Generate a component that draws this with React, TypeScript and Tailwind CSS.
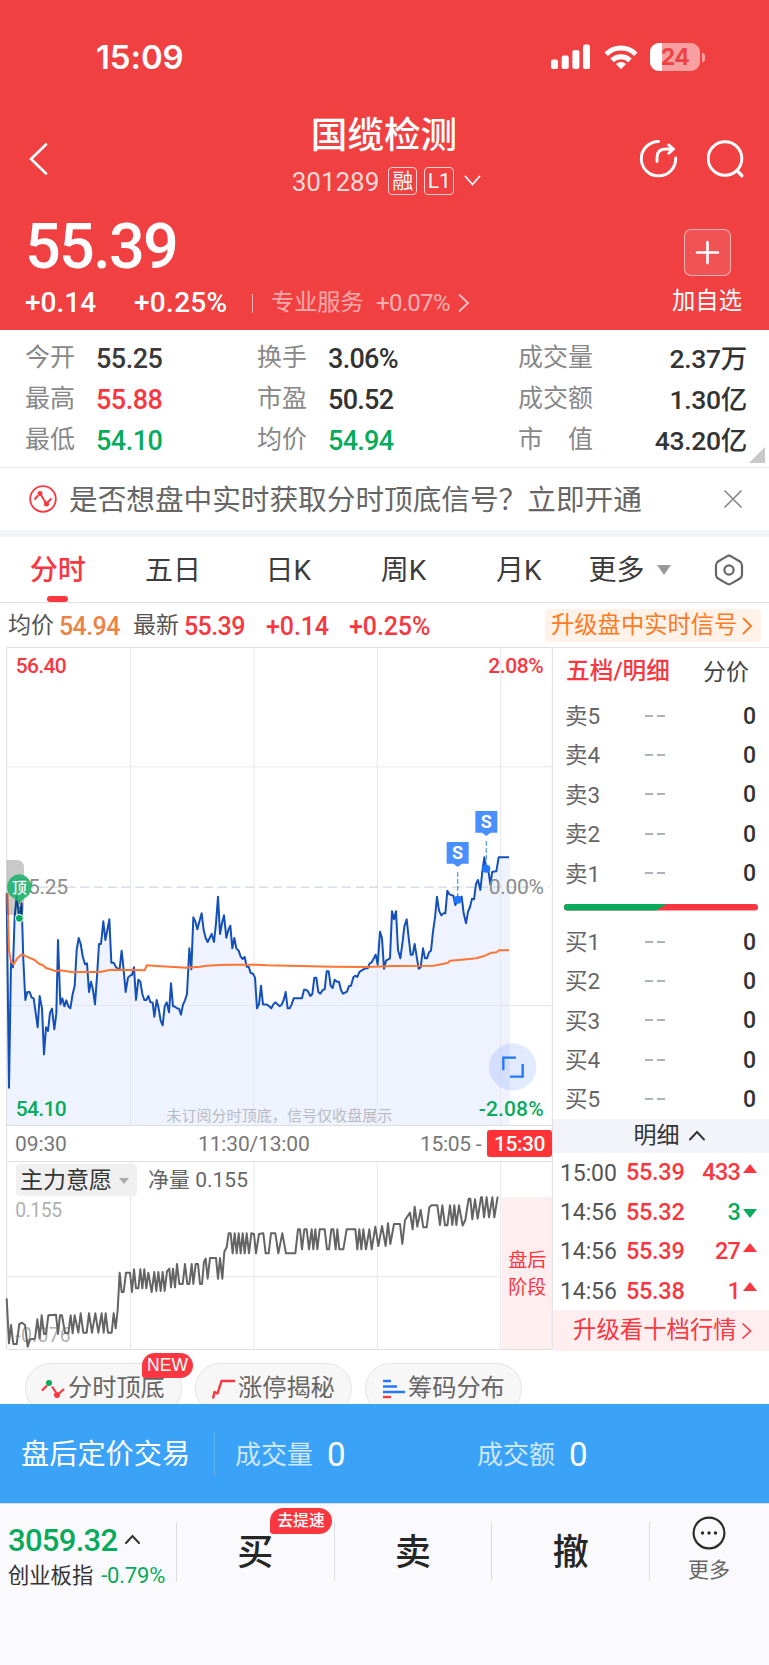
import type { ReactNode } from "react";

const PRICE_LINE =
  "20,760 27,1343 33,970 39,982 44,830 50,770 58,835 65,790 70,960 76,1080 82,1056 89,1056 95,1073 101,1075 113,1162 119,1068 126,1105 132,1243 138,1162 144,1173 150,1118 156,1106 163,1168 169,1120 174,900 181,1093 187,1075 193,1099 199,1081 205,1099 211,1105 218,1062 224,1038 230,930 236,894 242,912 248,948 255,973 261,970 267,1056 273,1025 279,1050 285,1093 291,1010 297,912 303,912 310,844 316,900 322,870 328,838 334,968 341,968 347,980 353,986 359,986 365,932 371,990 377,1056 384,1013 390,1007 396,1005 402,982 408,1080 415,1019 421,1025 427,1062 433,1080 439,1080 445,1068 451,1086 458,1088 463,1130 470,1080 476,1105 482,1142 488,1156 494,1099 500,1087 507,1117 513,1030 519,1099 525,1100 531,1105 537,1106 543,1124 549,1094 555,1081 561,1062 568,925 574,988 580,832 586,844 592,868 598,845 605,820 611,870 617,894 623,906 629,894 635,882 642,906 648,850 654,770 660,882 666,850 672,826 679,893 685,870 691,857 697,925 703,894 709,925 716,932 722,950 728,957 734,951 740,980 746,980 752,999 759,1001 765,1013 771,1105 777,1093 783,1037 789,1093 802,1094 814,1105 820,1093 826,1087 839,1099 845,1094 851,1080 857,1056 863,1105 869,1105 875,1093 881,1075 906,1075 912,1049 918,1049 924,1054 931,1068 937,1062 943,1013 949,1013 955,1056 961,1061 968,1050 974,1048 980,994 986,994 992,1037 998,1044 1004,1019 1011,1025 1017,1025 1023,1050 1029,1061 1041,1055 1047,1038 1053,1037 1060,1012 1066,1007 1072,1011 1078,996 1084,992 1096,985 1103,985 1109,970 1115,967 1127,944 1133,974 1140,875 1146,895 1152,986 1158,962 1170,955 1176,814 1182,838 1188,814 1194,930 1201,955 1207,912 1213,860 1220,838 1226,893 1232,944 1238,944 1244,912 1250,950 1256,986 1262,982 1269,925 1275,955 1281,955 1287,937 1293,932 1299,875 1305,832 1311,770 1317,812 1324,826 1330,820 1336,820 1342,752 1348,763 1360,767 1366,795 1373,780 1385,770 1391,820 1398,850 1404,815 1410,801 1416,776 1422,778 1428,732 1434,720 1441,750 1447,695 1453,652 1459,690 1465,690 1471,733 1477,695 1489,694 1496,652 1527,652";

const AVG_LINE =
  "22,760 27,930 33,965 41,973 52,955 66,943 80,950 104,960 118,972 128,975 138,984 152,988 168,994 180,991 220,997 240,996 300,996 328,990 350,989 434,991 440,976 470,978 560,983 600,980 620,977 660,975 700,974 765,974 800,976 1000,980 1100,981 1180,978 1300,977 1343,969 1350,962 1385,959 1428,955 1450,949 1475,938 1490,937 1497,931 1527,931";

const FORCE_LINE =
  "20,565 27,700 33,645 40,702 50,702 58,642 66,638 75,645 83,710 90,688 105,686 112,628 119,685 125,616 132,672 138,672 145,616 168,614 174,672 180,616 186,616 195,668 205,670 212,616 218,670 224,616 235,668 242,610 250,668 260,668 267,610 276,668 286,610 295,668 305,610 311,668 317,610 324,668 335,668 341,610 347,655 353,600 359,488 365,546 371,546 378,488 390,488 396,546 402,478 408,535 415,535 421,478 427,535 433,478 439,535 445,488 455,546 463,486 469,543 475,486 482,543 488,486 494,543 501,484 508,476 513,532 519,476 525,532 531,462 538,522 548,522 555,462 562,522 568,522 575,462 580,522 587,462 594,462 600,522 606,522 612,455 617,446 623,506 630,444 648,444 654,506 660,444 667,506 673,425 680,412 686,370 692,370 698,430 704,370 710,430 716,370 722,430 728,370 734,430 740,370 747,430 754,370 762,372 768,430 777,372 790,370 797,430 806,430 813,370 826,370 835,430 847,370 858,430 886,430 894,358 900,358 906,418 913,358 920,358 927,418 935,358 940,418 946,358 952,418 959,358 974,358 981,418 987,418 994,358 1000,358 1007,418 1012,358 1018,418 1030,418 1040,358 1066,358 1072,418 1078,358 1084,418 1090,358 1098,418 1108,358 1115,418 1126,350 1135,408 1146,348 1157,408 1164,340 1171,402 1182,342 1200,342 1207,402 1215,330 1230,308 1238,358 1244,290 1252,350 1262,300 1270,352 1280,352 1288,292 1295,286 1312,286 1320,345 1327,286 1335,346 1342,346 1350,286 1357,345 1363,286 1369,345 1377,286 1388,347 1396,330 1406,266 1411,266 1417,328 1425,268 1433,326 1443,262 1446,262 1452,322 1460,262 1467,322 1477,262 1483,322 1493,260";

const STATS = [
  ["今开", "55.25", "text-[#3a3a3a]", "换手", "3.06%", "text-[#333]", "成交量", "2.37万"],
  ["最高", "55.88", "text-[#fa3740]", "市盈", "50.52", "text-[#333]", "成交额", "1.30亿"],
  ["最低", "54.10", "text-[#07ab5b]", "均价", "54.94", "text-[#07ab5b]", "市　值", "43.20亿"],
];

const TABS = ["分时", "五日", "日K", "周K", "月K"];

const TRADES = [
  { time: "15:00", price: "55.39", volume: "433", up: true },
  { time: "14:56", price: "55.32", volume: "3", up: false },
  { time: "14:56", price: "55.39", volume: "27", up: true },
  { time: "14:56", price: "55.38", volume: "1", up: true },
];

function Stroke({
  d,
  w,
  h,
  width = 2,
  className = "",
}: {
  d: string;
  w: number;
  h: number;
  width?: number;
  className?: string;
}) {
  return (
    <svg
      width={w}
      height={h}
      viewBox={`0 0 ${w} ${h}`}
      fill="none"
      stroke="currentColor"
      strokeWidth={width}
      strokeLinecap="round"
      className={`shrink-0 ${className}`}
      aria-hidden="true"
    >
      <path d={d} />
    </svg>
  );
}

function StatusBar() {
  return (
    <div className="flex h-[114px] items-center pl-[96px] pr-[64px] font-['Inter','Noto_Sans_CJK_SC',sans-serif]">
      <span className="pt-[2px] text-[33px] font-semibold tracking-[-0.1px]">15:09</span>
      <svg width="40" height="26" viewBox="0 0 40 26" fill="currentColor" className="ml-auto" aria-hidden="true">
        <rect x="0" y="15.500" width="7" height="9.500" rx="2" />
        <rect x="10.700" y="11.500" width="7" height="13.500" rx="2" />
        <rect x="21.400" y="6" width="7" height="19" rx="2" />
        <rect x="32" y="0.500" width="7" height="24.500" rx="2" />
      </svg>
      <svg width="34" height="26" viewBox="0 0 34 26" className="ml-[13px]" aria-hidden="true">
        <g fill="none" stroke="currentColor" strokeWidth="5">
          <path d="M2.200 10.200a21 21 0 0 1 29.600 0" />
          <path d="M8 16.400a13 13 0 0 1 18 0" />
        </g>
        <path d="M17 25.300l-5-5.200a7.200 7.200 0 0 1 10 0z" fill="currentColor" />
      </svg>
      <div className="relative ml-[12px] flex h-[28px] w-[50px] items-center justify-center overflow-hidden rounded-[9px] bg-[#f89fa0]">
        <div className="absolute inset-y-0 left-0 w-[12px] bg-white" />
        <span className="relative text-[23px] leading-none font-bold tracking-[-0.5px] text-[#ef4244]">24</span>
      </div>
      <div className="ml-[2px] h-[9px] w-[3px] rounded-r-full bg-[#f89fa0]" />
    </div>
  );
}

function Header() {
  return (
    <header className="h-[330px] bg-[#f04042] text-white">
      <StatusBar />
      <div className="flex h-[93px] items-start pl-[28px] pr-[22px]">
        <Stroke w={20} h={32} width={2.6} d="M18 1.500L3 16l15 14.500" className="mt-[29px]" />
        <div className="ml-[149px] flex w-[374px] flex-col items-center">
          <h1 className="mt-[4px] text-[36.600px] leading-none font-medium">国缆检测</h1>
          <div className="mt-[11px] flex h-[31px] items-center pl-[5px]">
            <span className="pt-[2px] text-[26px] leading-none text-[#fcd9d9]">301289</span>
            <span className="ml-[9px] flex h-[28px] w-[29px] items-center justify-center rounded-[4px] border border-[#fbd0d0] text-[21px] leading-none">
              融
            </span>
            <span className="ml-[7px] flex h-[28px] w-[30px] items-center justify-center rounded-[4px] border border-[#fbd0d0] text-[21px] leading-none">
              L1
            </span>
            <Stroke w={17} h={12} width={1.800} d="M1.500 1.500l7 8 7-8" className="ml-[10px]" />
          </div>
        </div>
        <svg
          width="40"
          height="40"
          viewBox="0 0 40 40"
          fill="none"
          stroke="currentColor"
          strokeWidth="2.900"
          strokeLinecap="round"
          className="mt-[25px] ml-[68px]"
          aria-hidden="true"
        >
          <path d="M19.500 2.500A17.200 17.200 0 1 0 36.700 19" />
          <path d="M18 22.500v-4c0-6 3.500-8.500 9-8.500h6" />
          <path d="M29.800 6l4.500 4-4.500 4.200" />
        </svg>
        <svg
          width="40"
          height="40"
          viewBox="0 0 40 40"
          fill="none"
          stroke="currentColor"
          strokeWidth="2.900"
          strokeLinecap="round"
          className="mt-[25px] ml-[28px]"
          aria-hidden="true"
        >
          <circle cx="18" cy="19.500" r="16.800" />
          <path d="M30 31.500l4.800 5.200" strokeWidth="3.400" />
        </svg>
      </div>
      <div className="flex h-[123px] pl-[25px]">
        <div className="w-[639px]">
          <div className="mt-[8px] text-[63px] leading-none font-medium tracking-[-1.700px]">55.39</div>
          <div className="mt-[8px] flex h-[34px] items-center leading-none">
            <span className="w-[109px] text-[28px] font-medium">+0.14</span>
            <span className="w-[118px] text-[28px] font-medium tracking-[0.300px]">+0.25%</span>
            <span className="h-[19px] w-px bg-white/60" />
            <span className="ml-[18px] w-[105px] text-[23.200px] text-white/55">专业服务</span>
            <span className="w-[82px] text-[24px] tracking-[-0.700px] text-white/60">+0.07%</span>
            <Stroke w={12} h={20} width={1.8} d="M1.500 2l8.500 8-8.500 8" className="text-white/70" />
          </div>
        </div>
        <div className="flex w-[86px] flex-col items-center">
          <div className="mt-[22px] flex h-[47px] w-[47px] items-center justify-center rounded-[7px] border border-white/55 bg-white/10">
            <Stroke w={25} h={25} width={2.6} d="M12.500 2v21M2 12.500h21" />
          </div>
          <span className="mt-[14px] text-[23.300px] leading-none">加自选</span>
        </div>
      </div>
    </header>
  );
}

function Stats() {
  return (
    <section className="relative h-[138px] border-b border-[#e6e8eb] pt-[8px]">
      {STATS.map(([a, av, ac, b, bv, bc, c, cv]) => (
        <div key={a} className="flex h-[41px] items-center pl-[25px] pr-[22px] leading-none">
          <span className="w-[71px] pb-[2px] text-[25px] text-[#888]">{a}</span>
          <span className={`w-[161px] pt-px text-[27px] font-medium tracking-[-0.500px] ${ac}`}>{av}</span>
          <span className="w-[71px] pb-[2px] text-[25px] text-[#888]">{b}</span>
          <span className={`w-[190px] pt-px text-[27px] font-medium tracking-[-0.700px] ${bc}`}>{bv}</span>
          <span className="pb-[2px] text-[25px] text-[#888]">{c}</span>
          <span className="ml-auto pt-px text-[26.500px] font-medium tracking-[-0.300px] text-[#333]">{cv}</span>
        </div>
      ))}
      <svg width="16" height="16" className="absolute right-[4px] bottom-[4px]" aria-hidden="true">
        <path d="M16 0v16H0z" fill="#c8c8c8" />
      </svg>
    </section>
  );
}

function SignalBanner() {
  return (
    <section className="flex h-[62px] items-center pl-[29px] pr-[27px]">
      <svg width="28" height="28" viewBox="0 0 28 28" fill="none" stroke="#fa3740" aria-hidden="true">
        <circle cx="14" cy="14" r="12.800" strokeWidth="1.800" />
        <path d="M5.500 14.500l3.500-4M12 10l4.500 7.500M18.500 17.500l4-4" strokeWidth="1.900" />
        <circle cx="11" cy="8.500" r="2.500" fill="#fa3740" stroke="none" />
        <circle cx="17.500" cy="19" r="2.500" fill="#fa3740" stroke="none" />
      </svg>
      <span className="ml-[12px] pt-[2px] text-[28.650px] leading-none whitespace-nowrap text-[#666]">
        是否想盘中实时获取分时顶底信号？立即开通
      </span>
      <Stroke w={18} h={18} width={1.7} d="M1 1l16 16M17 1L1 17" className="ml-auto text-[#888]" />
    </section>
  );
}

function PeriodTabs() {
  return (
    <nav className="flex h-[66px] items-center border-b border-[#dfe1e4] text-[28px] leading-none text-[#3c3c3c]">
      {TABS.map((tab, i) => (
        <button
          key={tab}
          className={`relative h-full w-[115.300px] pt-[2px] ${i === 0 ? "font-medium text-[#fa3740]" : ""}`}
        >
          {tab}
          {i === 0 && (
            <span className="absolute bottom-0 left-[47px] h-[6px] w-[21px] rounded-[3px] bg-[#fa3740]" />
          )}
        </button>
      ))}
      <span className="ml-[12px] pt-[2px]">更多</span>
      <svg width="14" height="10" className="mt-px ml-[12px]" aria-hidden="true">
        <path d="M0 0h14l-7 10z" fill="#999" />
      </svg>
      <svg
        width="30"
        height="32"
        viewBox="0 0 30 32"
        fill="none"
        stroke="#666"
        strokeWidth="2.200"
        strokeLinejoin="round"
        className="ml-[43px]"
        aria-hidden="true"
      >
        <path d="M15 1.700c1 0 1.700.4 3 1.200l7.500 4.400c1.800 1.100 2.500 1.900 2.500 4v9.400c0 2.100-.7 2.900-2.500 4L18 29.100c-1.300.8-2 1.200-3 1.200s-1.700-.4-3-1.200l-7.500-4.400c-1.800-1.100-2.500-1.900-2.500-4v-9.400c0-2.100.7-2.900 2.500-4L12 2.900c1.300-.8 2-1.200 3-1.200z" />
        <circle cx="15" cy="16" r="4.600" />
      </svg>
    </nav>
  );
}

function QuoteLine() {
  return (
    <div className="flex h-[44px] items-center pt-px pl-[8px] pr-[8px] leading-none">
      <span className="w-[51px] pb-px text-[23px] text-[#555]">均价</span>
      <span className="w-[74px] pt-px text-[25px] font-medium tracking-[-0.600px] text-[#ec8346]">54.94</span>
      <span className="w-[51px] pb-px text-[23px] text-[#555]">最新</span>
      <span className="w-[82px] pt-px text-[25px] font-medium tracking-[-0.600px] text-[#fa3740]">55.39</span>
      <span className="w-[83px] pt-px text-[25px] font-medium tracking-[-0.100px] text-[#fa3740]">+0.14</span>
      <span className="pt-px text-[25px] font-medium tracking-[-0.100px] text-[#fa3740]">+0.25%</span>
      <button className="ml-auto flex h-[33px] w-[216px] items-center rounded-[4px] bg-[#fff2e9] pl-[6px] text-[23.300px] text-[#ff7a1f]">
        升级盘中实时信号
        <Stroke w={11} h={18} width={1.9} d="M1.500 1.500l7.500 7.500-7.500 7.500" className="ml-[5px]" />
      </button>
    </div>
  );
}

function SellFlag({ x, y, dotY }: { x: number; y: number; dotY: number }) {
  return (
    <g>
      <line x1={x} y1={y + 90} x2={x} y2={dotY} stroke="#5b9bff" strokeWidth="4" strokeDasharray="14 7" />
      <path d={`M${x - 33} ${y}h66v65h-20l-13 10-13-10h-20z`} fill="#4a8fff" />
      <circle cx={x} cy={dotY} r="12" fill="#2277ff" />
      <text x={x} y={y + 52} textAnchor="middle" fontSize="54" fontWeight="700" fill="#fff">
        S
      </text>
    </g>
  );
}

function PriceChart() {
  return (
    <svg width="553" height="478" viewBox="0 21 1659 1434" className="block" aria-hidden="true">
      <polygon points={`${PRICE_LINE} 1530,652 1530,1455 20,1455`} fill="#eff3ff" />
      <g stroke="#e6e7ea" strokeWidth="3">
        <path d="M20 380.500H1657M20 1096.500H1657" />
        <path d="M391.500 22V1455M762 22V1455M1132 22V1455M1502 22V1455" />
      </g>
      <path d="M20 1455V22.500H1657V1455" fill="none" stroke="#dcdee1" strokeWidth="3" />
      <line x1="34" y1="741.500" x2="1648" y2="741.500" stroke="#ccd8e0" strokeWidth="4" strokeDasharray="27 14.300" />
      <g fontSize="63" fontWeight="500">
        <text x="47" y="98" textLength="153" fill="#fa3740">56.40</text>
        <text x="1465" y="98" textLength="166" fill="#fa3740">2.08%</text>
        <text x="47" y="1428" textLength="153" fill="#07ab5b">54.10</text>
        <text x="1436" y="1428" textLength="195" fill="#07ab5b">-2.08%</text>
      </g>
      <text x="499" y="1443" fontSize="45" textLength="678" fill="#b8bbc2">
        未订阅分时顶底，信号仅收盘展示
      </text>
      <polyline points={PRICE_LINE} fill="none" stroke="#1450b8" strokeWidth="6" strokeLinejoin="round" />
      <polyline points={AVG_LINE} fill="none" stroke="#ff7433" strokeWidth="6" strokeLinejoin="round" />
      <path d="M20 660h32a20 20 0 0 1 20 20v124a20 20 0 0 1-20 20H20z" fill="#000" fillOpacity="0.210" />
      <g fontSize="63" fill="#8c8c8c">
        <text x="50" y="763" textLength="154">55.25</text>
        <text x="1466" y="763" textLength="166">0.00%</text>
      </g>
      <line x1="58" y1="780" x2="58" y2="828" stroke="#07ab5b" strokeWidth="4" strokeDasharray="12 8" />
      <path d="M58 703a38 38 0 0 1 16 72l-16 14-16-14a38 38 0 0 1 16-72z" fill="#18b26a" fillOpacity="0.860" />
      <text x="58" y="758" textAnchor="middle" fontSize="44" fontWeight="500" fill="#fff">
        顶
      </text>
      <circle cx="58" cy="835" r="12" fill="#07ab5b" stroke="#fff" strokeWidth="3" />
      <SellFlag x={1373} y={606} dotY={779} />
      <SellFlag x={1459} y={513} dotY={686} />
      <circle cx="1538" cy="1281" r="71" fill="#2f6bff" fillOpacity="0.140" />
      <path d="M1510 1291V1253h38M1568 1272v38h-38" fill="none" stroke="#2277ff" strokeWidth="7" />
    </svg>
  );
}

function TimeAxis() {
  return (
    <div className="ml-[6px] flex h-[36px] w-[547px] items-center border-x border-t border-[#dcdee1] pl-[8px] text-[21px] leading-none text-[#777]">
      <span className="w-[183px] pt-[2px] tracking-[-0.100px]">09:30</span>
      <span className="w-[222px] pt-[2px] tracking-[-0.150px]">11:30/13:00</span>
      <span className="w-[67px] pt-[2px] tracking-[-0.300px]">15:05 -</span>
      <span className="flex h-[27px] w-[65px] items-center justify-center rounded-[3px] bg-[#ff3237] pt-px font-medium tracking-[-0.500px] text-white">
        15:30
      </span>
    </div>
  );
}

function ForceChart() {
  return (
    <div className="relative h-[189px]">
      <svg width="553" height="189" viewBox="0 153 1659 567" className="block" aria-hidden="true">
        <g stroke="#e6e7ea" strokeWidth="3">
          <path d="M20 500H1502" />
          <path d="M391.500 154V718M762 154V718M1132 154V718M1502 154V718" />
        </g>
        <rect x="1506" y="261" width="150" height="457" fill="#ffeef0" />
        <path d="M20 154.500H1657V718.500H20z" fill="none" stroke="#dcdee1" strokeWidth="3" />
        <g fontSize="58" fill="#b0b0b0">
          <text x="46" y="320" textLength="140">0.155</text>
          <text x="46" y="696" textLength="166">-0.076</text>
        </g>
        <polyline points={FORCE_LINE} fill="none" stroke="#646464" strokeWidth="6" strokeLinejoin="round" />
        <g fontSize="57" fill="#fa3740">
          <text x="1525" y="472" textLength="114">盘后</text>
          <text x="1525" y="553" textLength="114">阶段</text>
        </g>
      </svg>
      {/* indicator picker floats over the plot */}
      <div className="absolute top-[3px] left-[16px] flex items-center leading-none">
        <button className="flex h-[32px] w-[121px] items-center rounded-[4px] bg-[#f0f0f0] pl-[4px] text-[23px] text-[#333]">
          主力意愿
          <svg width="10" height="6" className="mt-[2px] ml-[7px]" aria-hidden="true">
            <path d="M0 0h10L5 6z" fill="#aaa" />
          </svg>
        </button>
        <span className="ml-[11px] pt-px text-[21px] text-[#666]">净量 0.155</span>
      </div>
    </div>
  );
}

function DepthRows({ side, levels }: { side: string; levels: number[] }) {
  return (
    <>
      {levels.map((level) => (
        <div key={level} className="flex h-[39.400px] items-center pl-[12px] pr-[13px] leading-none">
          <span className="w-[80px] pt-px text-[22.500px] text-[#666]">
            {side}
            {level}
          </span>
          <span className="flex gap-[4px]">
            <i className="h-[2px] w-[8px] bg-[#a9b2bd]" />
            <i className="h-[2px] w-[8px] bg-[#a9b2bd]" />
          </span>
          <span className="ml-auto pt-px text-[23px] font-medium text-[#333]">0</span>
        </div>
      ))}
    </>
  );
}

function OrderBook() {
  return (
    <aside className="w-[216px] border-t border-[#dfe1e4]">
      <div className="flex h-[48px] items-center justify-between pl-[13px] pr-[20px] text-[23px] leading-none">
        <span className="text-[23.700px] font-medium text-[#fa3740]">五档/明细</span>
        <span className="text-[#444]">分价</span>
      </div>
      <DepthRows side="卖" levels={[5, 4, 3, 2, 1]} />
      <div className="flex h-[29px] items-center pl-[11px]">
        <svg width="194" height="7" aria-hidden="true">
          <rect width="194" height="6.500" rx="3.250" fill="#fa3740" />
          <path d="M3.250 0H103L92 6.500H3.250a3.250 3.250 0 0 1 0-6.500z" fill="#07ab5b" />
        </svg>
      </div>
      <DepthRows side="买" levels={[1, 2, 3, 4, 5]} />
      <div className="flex h-[34px] items-center justify-center gap-[9px] bg-[#f2f4f9] pl-[16px] text-[23px] leading-none text-[#333]">
        明细
        <Stroke w={16} h={11} width={1.9} d="M1 9.500l7-7.500 7 7.500" />
      </div>
      {TRADES.map((trade, i) => (
        <div key={i} className="flex h-[39.400px] items-center pl-[7px] pr-[12px] leading-none">
          <span className="w-[66px] pt-px text-[23px]  tracking-[-0.100px] text-[#555]">{trade.time}</span>
          <span className="pt-px text-[23.500px] font-medium tracking-[-0.300px] text-[#fa3740]">{trade.price}</span>
          <span
            className={`ml-auto pt-px text-[23.500px] font-medium tracking-[-0.800px] ${trade.up ? "text-[#fa3740]" : "text-[#07ab5b]"}`}
          >
            {trade.volume}
          </span>
          <svg width="14" height="9" className={`ml-[3px] ${trade.up ? "mb-[8px]" : "mt-[4px]"}`} aria-hidden="true">
            {trade.up ? <path d="M0 9l7-9 7 9z" fill="#fa3740" /> : <path d="M0 0l7 9 7-9z" fill="#07ab5b" />}
          </svg>
        </div>
      ))}
      <button className="flex h-[41px] w-full items-center bg-[#ffeef0] pl-[20px] text-[23.400px] leading-none text-[#fa3740]">
        升级看十档行情
        <Stroke w={10} h={16} width={1.7} d="M1 1l7.500 7L1 15" className="ml-[5px]" />
      </button>
    </aside>
  );
}

function Pill({ icon, badge, children }: { icon: ReactNode; badge?: string; children: ReactNode }) {
  return (
    <div className="relative flex h-[51px] w-[157px] shrink-0 items-center rounded-full border border-[#e4e4e4] bg-[#f7f7f7] pl-[15px] text-[24.200px] leading-none text-[#666]">
      {icon}
      <span className="ml-[3px]">{children}</span>
      {badge && (
        <span className="absolute -top-[11px] right-[-12px] flex h-[25px] w-[51px] items-center justify-center rounded-[13px] rounded-bl-[3px] bg-[#fa3740] font-['Liberation_Sans',sans-serif] text-[17.500px] text-white">
          {badge}
        </span>
      )}
    </div>
  );
}

function Shortcuts() {
  return (
    <div className="flex h-[54px] gap-[13px] overflow-hidden pt-[13px] pl-[25px]">
      <Pill
        badge="NEW"
        icon={
          <svg width="24" height="20" viewBox="0 0 24 20" fill="none" stroke="#fa3740" strokeWidth="2.200" aria-hidden="true">
            <path d="M1 11.500l5-5M11 7.500l4 6M18 14.500l5-4.500" />
            <circle cx="8" cy="4" r="3" fill="#07ab5b" stroke="none" />
            <circle cx="16" cy="16" r="3" fill="#fa3740" stroke="none" />
          </svg>
        }
      >
        分时顶底
      </Pill>
      <Pill
        icon={
          <svg width="24" height="20" viewBox="0 0 24 20" fill="none" stroke="#fa3740" strokeWidth="2.400" aria-hidden="true">
            <path d="M2 19.500l1.500-6.500 3 1.500L10.500 2H24" strokeLinejoin="round" />
          </svg>
        }
      >
        涨停揭秘
      </Pill>
      <Pill
        icon={
          <svg width="24" height="20" viewBox="0 0 24 20" fill="none" stroke="#2878ff" strokeWidth="2.400" aria-hidden="true">
            <path d="M2 2h8M2 7.500h14M2 13h22" />
            <path d="M2 18h8" stroke="#fa3740" />
          </svg>
        }
      >
        筹码分布
      </Pill>
    </div>
  );
}

function AfterHoursBar() {
  return (
    <section className="flex h-[99px] items-center bg-[#3aa3f8] pt-px pl-[21px] leading-none text-white">
      <span className="w-[193px] pt-[2px] text-[28.200px]">盘后定价交易</span>
      <span className="h-[45px] w-px bg-white/20" />
      <span className="ml-[20px] w-[92px] pt-px text-[26px] text-white/75">成交量</span>
      <span className="w-[150px] text-[33px]">0</span>
      <span className="w-[92px] pt-px text-[26px] text-white/75">成交额</span>
      <span className="text-[33px]">0</span>
    </section>
  );
}

function TradeButton({ label, badge }: { label: string; badge?: string }) {
  return (
    <button className="relative h-[59px] w-[157.700px] border-l border-[#dcdde0] pt-[2px] text-[36px] leading-none font-medium text-[#262626]">
      {label}
      {badge && (
        <span className="absolute -top-[14px] left-[93px] flex h-[26px] w-[62px] items-center justify-center rounded-[13px] rounded-bl-[3px] bg-[#fa3740] text-[15.800px] text-white">
          {badge}
        </span>
      )}
    </button>
  );
}

function TradeBar() {
  return (
    <footer className="flex h-[162px] items-start border-t border-[#dcdde0] bg-[#fafafd] leading-none">
      <div className="w-[176px] pl-[8px]">
        <div className="mt-[21px] flex items-center text-[31px] font-medium tracking-[-0.700px] text-[#07ab5b]">
          3059.32
          <Stroke w={15} h={10} d="M1 9l6.500-7L14 9" className="mb-[4px] ml-[8px] text-[#333]" />
        </div>
        <div className="mt-[8px] flex items-center text-[21.300px] text-[#333]">
          创业板指
          <span className="ml-[8px] pt-px text-[22px] tracking-[-0.200px] text-[#07ab5b]">-0.79%</span>
        </div>
      </div>
      <div className="mt-[18px] flex">
        <TradeButton label="买" badge="去提速" />
        <TradeButton label="卖" />
        <TradeButton label="撤" />
        <span className="h-[59px] w-px bg-[#dcdde0]" />
      </div>
      <div className="flex w-[118px] flex-col items-center">
        <svg width="34" height="34" viewBox="0 0 34 34" className="mt-[12px]" aria-hidden="true">
          <circle cx="17" cy="17" r="15.400" fill="none" stroke="#2b2b2b" strokeWidth="2.200" />
          <g fill="#2b2b2b">
            <circle cx="10.500" cy="17" r="1.700" />
            <circle cx="17" cy="17" r="1.700" />
            <circle cx="23.500" cy="17" r="1.700" />
          </g>
        </svg>
        <span className="mt-[10px] text-[21px] text-[#666]">更多</span>
      </div>
    </footer>
  );
}

export default function App() {
  return (
    <div className="h-[1665px] w-[769px] overflow-hidden bg-white font-['Roboto','Noto_Sans_CJK_SC',sans-serif]">
      <Header />
      <Stats />
      <SignalBanner />
      <div className="h-[7px] bg-[#f2f4f9]" />
      <PeriodTabs />
      <QuoteLine />
      <main className="flex h-[703px]">
        <div className="w-[553px]">
          <PriceChart />
          <TimeAxis />
          <ForceChart />
        </div>
        <OrderBook />
      </main>
      <Shortcuts />
      <AfterHoursBar />
      <TradeBar />
    </div>
  );
}
